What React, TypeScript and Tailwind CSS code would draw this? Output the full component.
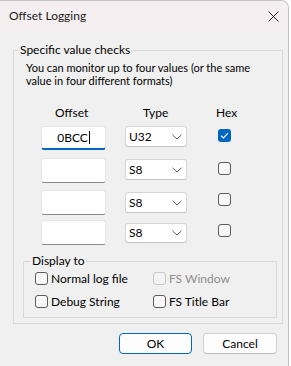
import React from "react";

const font = { fontFamily: 'Lato, "Noto Sans", sans-serif' };

function Chevron() {
  return (
    <svg width="10" height="6" viewBox="0 0 10 6" className="shrink-0">
      <path d="M0.5 0.8 L5 5 L9.5 0.8" fill="none" stroke="#5f5f5f" strokeWidth="1" />
    </svg>
  );
}

function Combo({ value, cls }: { value: string; cls: string }) {
  return (
    <div
      className={`ml-[19px] w-[62px] flex items-center justify-between pl-[3px] pr-[4px] bg-white border border-[#d5d5d5] border-b-[#c4c4c4] rounded-[3px] text-[12px] text-black ${cls}`}
    >
      <span>{value}</span>
      <Chevron />
    </div>
  );
}

function Box({ checked, disabled, cls }: { checked?: boolean; disabled?: boolean; cls?: string }) {
  if (checked) {
    return (
      <div className={`w-[13px] h-[13px] rounded-[3px] bg-[#0067c0] flex items-center justify-center shrink-0 ${cls ?? ""}`}>
        <svg width="9" height="7" viewBox="0 0 9 7">
          <path d="M1 3.6 L3.4 6 L8 1.2" fill="none" stroke="white" strokeWidth="1.1" />
        </svg>
      </div>
    );
  }
  return (
    <div
      className={`w-[13px] h-[13px] rounded-[3px] border shrink-0 ${
        disabled ? "border-[#c8c8c8] bg-[#f3f3f3]" : "border-[#5c5c5c] bg-[#f7f7f7]"
      } ${cls ?? ""}`}
    />
  );
}

function Edit({ focused, text, cls }: { focused?: boolean; text?: string; cls: string }) {
  return (
    <div
      className={`ml-[18px] w-[65px] bg-white border border-[#e6e6e6] rounded-[3px] flex items-center justify-center text-[12px] text-black ${
        focused ? "border-b-2 border-b-[#0067c0]" : "border-b-[#8a8a8a]"
      } ${cls}`}
    >
      {text ? (
        <span className="flex items-center">
          {text}
          <span className="inline-block w-px h-[13px] bg-black ml-[1px]" />
        </span>
      ) : null}
    </div>
  );
}

export default function App() {
  return (
    <div className="w-[291px] h-[366px] bg-white" style={font}>
      <div className="w-[289px] h-[366px] bg-[#f0f0f0] border-r border-t border-[#c2c2c2] rounded-tr-[8px] overflow-hidden flex flex-col">
        {/* title bar */}
        <div className="h-[30px] bg-[#f5eff1] flex items-center justify-between pl-[9px] pr-[9px] shrink-0">
          <span className="text-[12px] text-[#1b1b1b] leading-none">Offset Logging</span>
          <svg width="11" height="11" viewBox="0 0 11 11">
            <path d="M0.5 0.5 L10.5 10.5 M10.5 0.5 L0.5 10.5" stroke="#222" strokeWidth="1" />
          </svg>
        </div>

        {/* body */}
        <div className="pl-[13px] pr-[6px]">
          <fieldset className="mt-[11px] w-[270px] h-[282px] border border-[#d9d9d9]">
            <legend className="ml-[5px] px-[1px] text-[12px] leading-[16px] text-black">Specific value checks</legend>
            <div className="pl-[9px] pr-[5px]">
              <p className="pl-[3px] mt-[3px] text-[11px] leading-[13px] text-black">
                You can monitor up to four values (or the same value in four different formats)
              </p>
              <div className="grid grid-cols-[88px_73px_auto] pl-[32px] mt-[18px] text-[12px] leading-[16px] text-black">
                <span>Offset</span>
                <span>Type</span>
                <span>Hex</span>
              </div>

              <div className="flex items-start mt-[5px]">
                <Edit focused text="0BCC" cls="h-[24px]" />
                <Combo value="U32" cls="h-[21px]" />
                <Box checked cls="ml-[31px] mt-[3px]" />
              </div>
              <div className="flex items-start mt-[8px]">
                <Edit cls="h-[25px]" />
                <Combo value="S8" cls="h-[21px] mt-[1px]" />
                <Box cls="ml-[31px] mt-[4px]" />
              </div>
              <div className="flex items-start mt-[7px]">
                <Edit cls="h-[25px]" />
                <Combo value="S8" cls="h-[21px] mt-[2px]" />
                <Box cls="ml-[31px] mt-[3px]" />
              </div>
              <div className="flex items-start mt-[5px]">
                <Edit cls="h-[25px]" />
                <Combo value="S8" cls="h-[20px] mt-[3px]" />
                <Box cls="ml-[31px] mt-[4px]" />
              </div>

              <fieldset className="mt-[8px] w-[254px] h-[65px] border border-[#d9d9d9]">
                <legend className="ml-[7px] px-[1px] text-[12px] leading-[16px] text-black">Display to</legend>
                <div className="grid grid-cols-[118px_1fr] gap-y-[10px] mt-[3px] pl-[11px] text-[12px] leading-[13px]">
                  <div className="flex items-center gap-[3px]">
                    <Box />
                    <span className="text-black">Normal log file</span>
                  </div>
                  <div className="flex items-center gap-[3px]">
                    <Box disabled />
                    <span className="text-[#8d8d8d]">FS Window</span>
                  </div>
                  <div className="flex items-center gap-[3px]">
                    <Box />
                    <span className="text-black">Debug String</span>
                  </div>
                  <div className="flex items-center gap-[3px]">
                    <Box />
                    <span className="text-black">FS Title Bar</span>
                  </div>
                </div>
              </fieldset>
            </div>
          </fieldset>

          <div className="flex justify-end gap-[11px] mt-[9px] pr-[5px]">
            <button className="w-[73px] h-[21px] rounded-[4px] border border-[#0067c0] bg-[#fdfdfd] text-[12px] text-black">
              OK
            </button>
            <button className="w-[74px] h-[21px] rounded-[4px] border border-[#d0d0d0] border-b-[#bcbcbc] bg-[#fdfdfd] text-[12px] text-black">
              Cancel
            </button>
          </div>
        </div>
      </div>
    </div>
  );
}
